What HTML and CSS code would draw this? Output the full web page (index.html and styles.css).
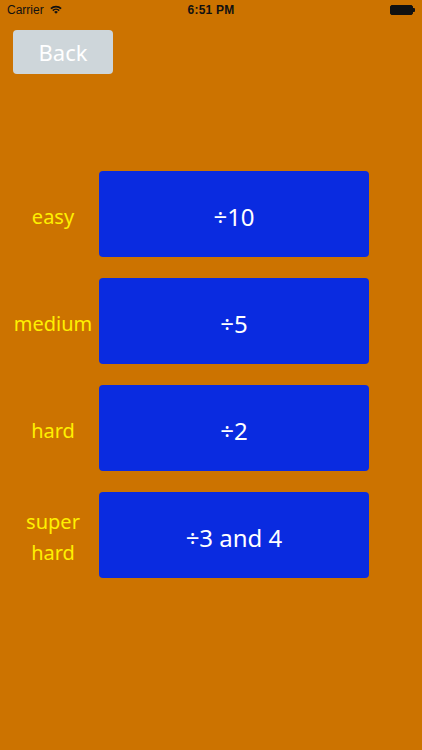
FILE: index.html
```html
<!DOCTYPE html>
<html>
<head>
<meta charset="utf-8">
<link rel="stylesheet" href="styles.css">
</head>
<body>
<div class="screen">
  <div class="status">
    <div class="status-left">
      <span class="carrier">Carrier</span>
      <svg class="wifi" width="12" height="9" viewBox="0 0 12 9">
        <path d="M0.3 3.1 A8 8 0 0 1 11.7 3.1 L10.5 4.3 A6.3 6.3 0 0 0 1.5 4.3 Z" fill="#111"/>
        <path d="M2.2 5.0 A5.3 5.3 0 0 1 9.8 5.0 L8.6 6.2 A3.6 3.6 0 0 0 3.4 6.2 Z" fill="#111"/>
        <path d="M4.1 6.9 A2.7 2.7 0 0 1 7.9 6.9 L6 8.8 Z" fill="#111"/>
      </svg>
    </div>
    <div class="time">6:51 PM</div>
    <div class="status-right">
      <div class="battery"></div>
      <div class="battery-nub"></div>
    </div>
  </div>

  <div class="top">
    <button class="back">Back</button>
  </div>

  <div class="levels">
    <div class="row">
      <div class="label">easy</div>
      <div class="choice">÷10</div>
    </div>
    <div class="row">
      <div class="label">medium</div>
      <div class="choice">÷5</div>
    </div>
    <div class="row">
      <div class="label">hard</div>
      <div class="choice">÷2</div>
    </div>
    <div class="row">
      <div class="label">super<br>hard</div>
      <div class="choice">÷3 and 4</div>
    </div>
  </div>
</div>
</body>
</html>
```

FILE: styles.css
```css
html, body {
  margin: 0;
  padding: 0;
}
body {
  background: #cc7300;
  font-family: "Noto Sans", "DejaVu Sans", sans-serif;
}
.screen {
  width: 422px;
  height: 750px;
  background: #cc7300;
  overflow: hidden;
}
.status {
  height: 20px;
  display: flex;
  align-items: center;
  justify-content: space-between;
  padding: 0 7px;
  font-family: "Liberation Sans", Arial, sans-serif;
  font-size: 12px;
  color: #111;
}
.status-left {
  display: flex;
  align-items: center;
  gap: 6px;
  width: 120px;
}
.wifi {
  display: block;
  margin-top: -1px;
}
.time {
  font-weight: bold;
  letter-spacing: 0.2px;
}
.status-right {
  width: 120px;
  display: flex;
  justify-content: flex-end;
  align-items: center;
}
.battery {
  width: 21px;
  height: 8px;
  border: 1px solid #111;
  border-radius: 2px;
  background: #111;
}
.battery-nub {
  width: 2px;
  height: 4px;
  background: #111;
  border-radius: 0 1px 1px 0;
}
.top {
  padding: 10px 0 0 13px;
  height: 44px;
}
.back {
  width: 100px;
  height: 44px;
  border: none;
  border-radius: 4px;
  background: #ced6da;
  color: #ffffff;
  font-family: "Noto Sans", "DejaVu Sans", sans-serif;
  font-size: 22px;
  padding: 0;
  cursor: pointer;
}
.levels {
  margin-top: 97px;
  display: flex;
  flex-direction: column;
  gap: 21px;
}
.row {
  display: flex;
  align-items: center;
  height: 86px;
}
.label {
  width: 99px;
  padding-left: 7px;
  box-sizing: border-box;
  text-align: center;
  color: #fff000;
  font-size: 20px;
  line-height: 31px;
  padding-top: 4px;
}
.choice {
  width: 270px;
  height: 86px;
  border-radius: 4px;
  background: #0a2be0;
  color: #ffffff;
  font-size: 24px;
  display: flex;
  align-items: center;
  justify-content: center;
  padding-top: 4px;
  box-sizing: border-box;
}
```
